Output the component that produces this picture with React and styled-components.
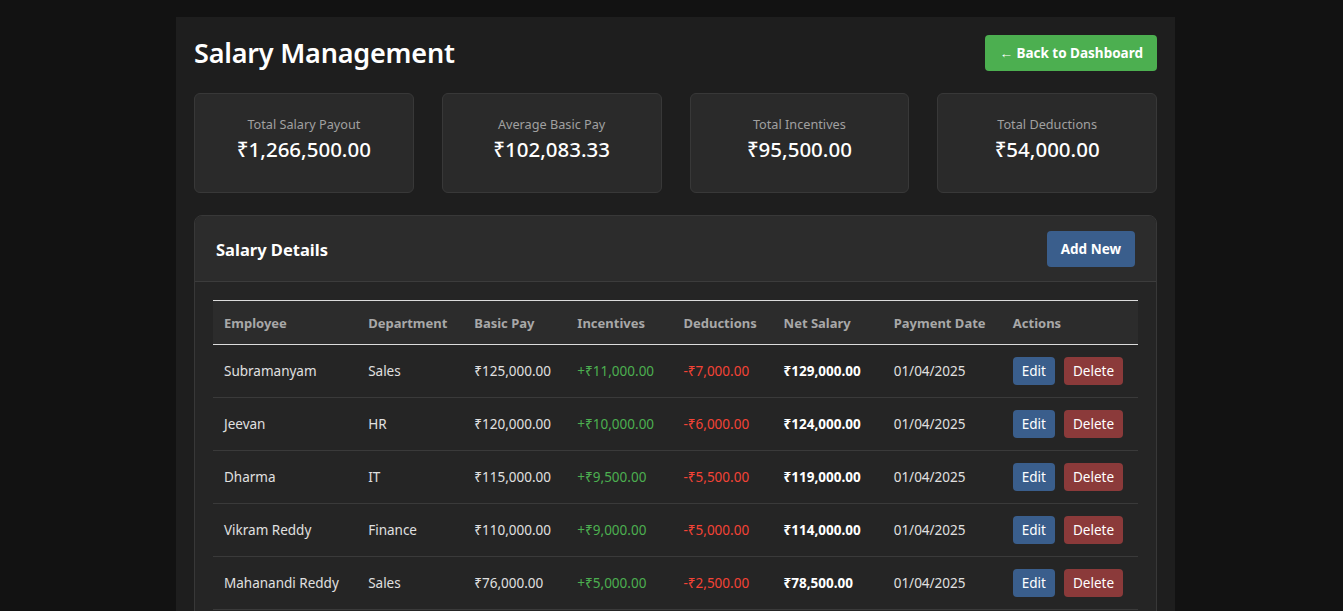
import React from "react";
import styled, { createGlobalStyle } from "styled-components";

const GlobalStyle = createGlobalStyle`
  html {
    overflow: hidden;
  }
  body {
    margin: 0;
    background: #121212;
    font-family: "Noto Sans", "Open Sans", sans-serif;
    color: #e0e0e0;
  }
`;

const Page = styled.div`
  padding: 17px 0 0 8px;
`;

const Container = styled.div`
  width: 999px;
  box-sizing: border-box;
  margin: 0 auto;
  padding: 18px;
  background: #1e1e1e;
  min-height: 640px;
`;

const TopBar = styled.div`
  display: flex;
  align-items: center;
  justify-content: space-between;
  height: 36px;
  margin-bottom: 22px;
`;

const Title = styled.h1`
  margin: 0;
  font-size: 27px;
  line-height: 36px;
  font-weight: 600;
  color: #fff;
  letter-spacing: -0.2px;
`;

const Button = styled.button`
  border: none;
  border-radius: 4px;
  color: #fff;
  font-family: inherit;
  cursor: pointer;
  background: ${(p) =>
    p.$variant === "green"
      ? "#4caf50"
      : p.$variant === "red"
      ? "#8b3a3a"
      : "#3a5e8c"};
  font-size: ${(p) => (p.$small ? "13.5px" : "13.5px")};
  font-weight: ${(p) => (p.$small ? 400 : 700)};
  height: ${(p) => (p.$small ? "28px" : "36px")};
  padding: ${(p) => (p.$small ? "0 9px" : "0 14px")};
`;

const Stats = styled.div`
  display: grid;
  grid-template-columns: repeat(4, 1fr);
  gap: 28px;
  margin-bottom: 22px;
`;

const StatCard = styled.div`
  height: 100px;
  box-sizing: border-box;
  background: #2a2a2a;
  border: 1px solid #383838;
  border-radius: 6px;
  display: flex;
  flex-direction: column;
  align-items: center;
  justify-content: center;
  padding-bottom: 8px;
`;

const StatLabel = styled.div`
  font-size: 12.7px;
  color: #a0a0a0;
  line-height: 18px;
`;

const StatValue = styled.div`
  font-size: 20.5px;
  font-weight: 500;
  color: #fff;
  line-height: 30px;
  margin-top: 1px;
`;

const Panel = styled.div`
  background: #252525;
  border: 1px solid #383838;
  border-radius: 8px;
  overflow: hidden;
`;

const PanelHeader = styled.div`
  display: flex;
  align-items: center;
  justify-content: space-between;
  padding: 15px 21px 14px;
  background: #2c2c2c;
  border-bottom: 1px solid #3c3c3c;
`;

const PanelTitle = styled.h2`
  margin: 0;
  font-size: 16.5px;
  font-weight: 700;
  color: #fff;
`;

const PanelBody = styled.div`
  padding: 18px;
`;

const Table = styled.table`
  width: 100%;
  border-collapse: collapse;
  table-layout: fixed;
  font-size: 13.5px;
`;

const Th = styled.th`
  text-align: left;
  font-size: 13px;
  font-weight: 700;
  color: #a8a8a8;
  background: #2c2c2c;
  height: 43px;
  padding: 0 11px;
  border-top: 1px solid #dcdcdc;
  border-bottom: 1px solid #dcdcdc;
  white-space: nowrap;
`;

const Td = styled.td`
  height: 52px;
  padding: 0 11px;
  border-bottom: 1px solid #3a3a3a;
  white-space: nowrap;
  color: ${(p) =>
    p.$tone === "up" ? "#4caf50" : p.$tone === "down" ? "#f44336" : p.$strong ? "#fff" : "#e0e0e0"};
  font-weight: ${(p) => (p.$strong ? 700 : 400)};
`;

const Actions = styled.div`
  display: flex;
  gap: 9px;
`;

const columns = [
  ["Employee", 144],
  ["Department", 106],
  ["Basic Pay", 103],
  ["Incentives", 106],
  ["Deductions", 100],
  ["Net Salary", 110],
  ["Payment Date", 119],
  ["Actions", 136],
];

const rows = [
  ["Subramanyam", "Sales", "₹125,000.00", "+₹11,000.00", "-₹7,000.00", "₹129,000.00"],
  ["Jeevan", "HR", "₹120,000.00", "+₹10,000.00", "-₹6,000.00", "₹124,000.00"],
  ["Dharma", "IT", "₹115,000.00", "+₹9,500.00", "-₹5,500.00", "₹119,000.00"],
  ["Vikram Reddy", "Finance", "₹110,000.00", "+₹9,000.00", "-₹5,000.00", "₹114,000.00"],
  ["Mahanandi Reddy", "Sales", "₹76,000.00", "+₹5,000.00", "-₹2,500.00", "₹78,500.00"],
  ["Kiran Kumar", "IT", "₹68,000.00", "+₹4,000.00", "-₹2,000.00", "₹70,000.00"],
];

const stats = [
  ["Total Salary Payout", "₹1,266,500.00"],
  ["Average Basic Pay", "₹102,083.33"],
  ["Total Incentives", "₹95,500.00"],
  ["Total Deductions", "₹54,000.00"],
];

export default function App() {
  return (
    <Page>
      <GlobalStyle />
      <Container>
        <TopBar>
          <Title>Salary Management</Title>
          <Button $variant="green">← Back to Dashboard</Button>
        </TopBar>
        <Stats>
          {stats.map(([label, value]) => (
            <StatCard key={label}>
              <StatLabel>{label}</StatLabel>
              <StatValue>{value}</StatValue>
            </StatCard>
          ))}
        </Stats>
        <Panel>
          <PanelHeader>
            <PanelTitle>Salary Details</PanelTitle>
            <Button>Add New</Button>
          </PanelHeader>
          <PanelBody>
            <Table>
              <colgroup>
                {columns.map(([name, w]) => (
                  <col key={name} style={{ width: w }} />
                ))}
              </colgroup>
              <thead>
                <tr>
                  {columns.map(([name]) => (
                    <Th key={name}>{name}</Th>
                  ))}
                </tr>
              </thead>
              <tbody>
                {rows.map((r) => (
                  <tr key={r[0]}>
                    <Td>{r[0]}</Td>
                    <Td>{r[1]}</Td>
                    <Td>{r[2]}</Td>
                    <Td $tone="up">{r[3]}</Td>
                    <Td $tone="down">{r[4]}</Td>
                    <Td $strong>{r[5]}</Td>
                    <Td>01/04/2025</Td>
                    <Td>
                      <Actions>
                        <Button $small>Edit</Button>
                        <Button $small $variant="red">
                          Delete
                        </Button>
                      </Actions>
                    </Td>
                  </tr>
                ))}
              </tbody>
            </Table>
          </PanelBody>
        </Panel>
      </Container>
    </Page>
  );
}
